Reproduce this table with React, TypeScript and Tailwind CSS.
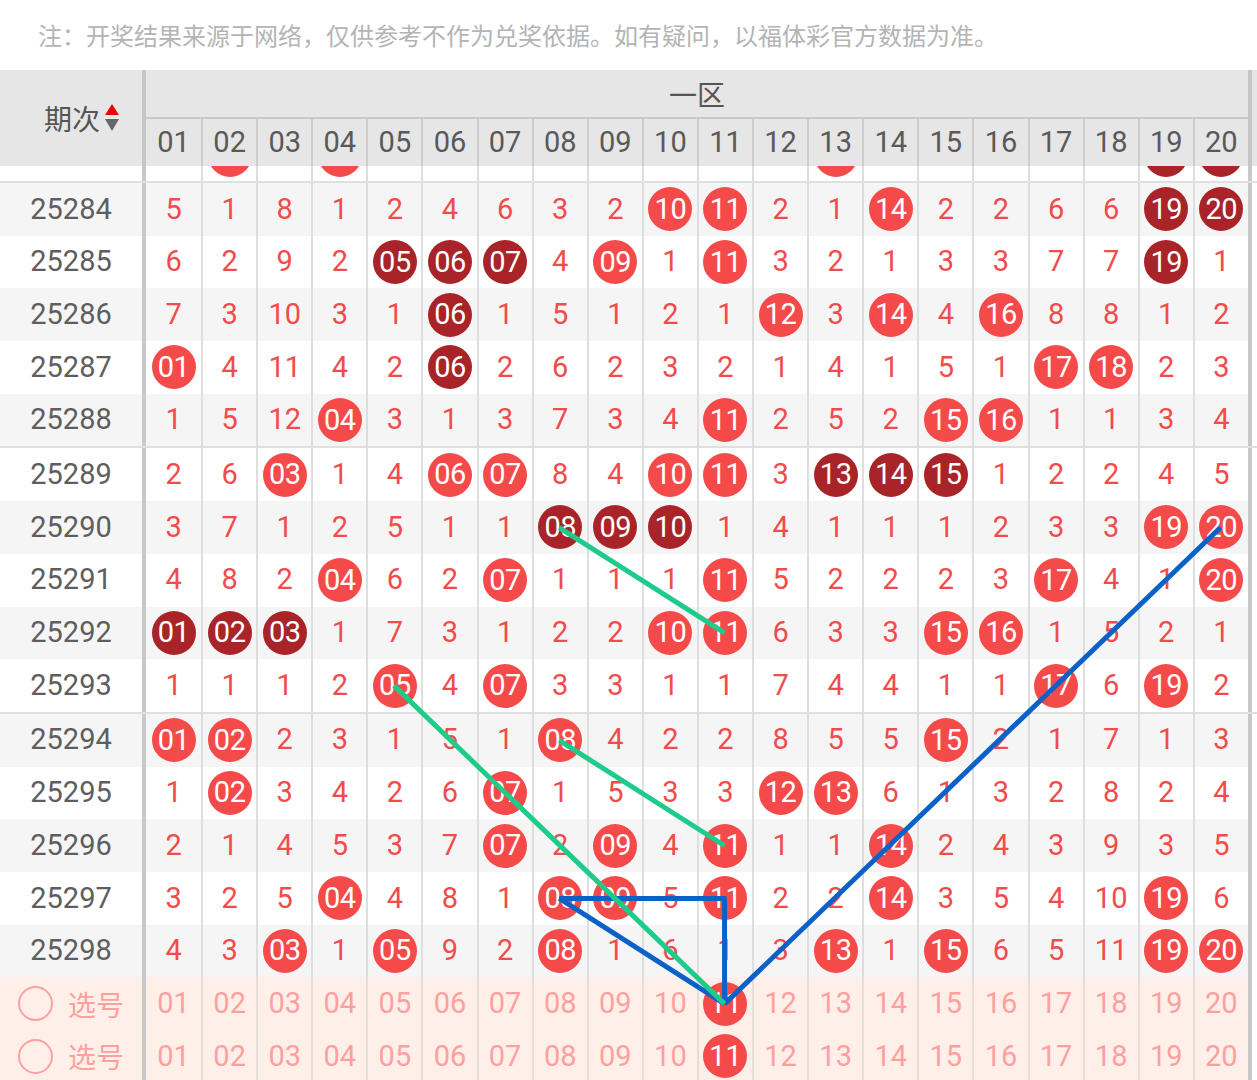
import React from "react";

type Row = { id: string; cells: string[] };

const raw: [string, string][] = [
  ["25283", "4 b02 7 b04 1 3 5 2 1 2 3 1 b13 3 1 1 5 5 d19 d20"],
  ["25284", "5 1 8 1 2 4 6 3 2 b10 b11 2 1 b14 2 2 6 6 d19 d20"],
  ["25285", "6 2 9 2 d05 d06 d07 4 b09 1 b11 3 2 1 3 3 7 7 d19 1"],
  ["25286", "7 3 10 3 1 d06 1 5 1 2 1 b12 3 b14 4 b16 8 8 1 2"],
  ["25287", "b01 4 11 4 2 d06 2 6 2 3 2 1 4 1 5 1 b17 b18 2 3"],
  ["25288", "1 5 12 b04 3 1 3 7 3 4 b11 2 5 2 b15 b16 1 1 3 4"],
  ["25289", "2 6 b03 1 4 b06 b07 8 4 b10 b11 3 d13 d14 d15 1 2 2 4 5"],
  ["25290", "3 7 1 2 5 1 1 d08 d09 d10 1 4 1 1 1 2 3 3 b19 b20"],
  ["25291", "4 8 2 b04 6 2 b07 1 1 1 b11 5 2 2 2 3 b17 4 1 b20"],
  ["25292", "d01 d02 d03 1 7 3 1 2 2 b10 b11 6 3 3 b15 b16 1 5 2 1"],
  ["25293", "1 1 1 2 b05 4 b07 3 3 1 1 7 4 4 1 1 b17 6 b19 2"],
  ["25294", "b01 b02 2 3 1 5 1 b08 4 2 2 8 5 5 b15 2 1 7 1 3"],
  ["25295", "1 b02 3 4 2 6 b07 1 5 3 3 b12 b13 6 1 3 2 8 2 4"],
  ["25296", "2 1 4 5 3 7 b07 2 b09 4 b11 1 1 b14 2 4 3 9 3 5"],
  ["25297", "3 2 5 b04 4 8 1 b08 b09 5 b11 2 2 b14 3 5 4 10 b19 6"],
  ["25298", "4 3 b03 1 b05 9 2 b08 1 6 1 3 b13 1 b15 6 5 11 b19 b20"],
];

const rows: Row[] = raw.map(([id, s]) => ({ id, cells: s.split(" ") }));
const cols = Array.from({ length: 20 }, (_, i) => String(i + 1).padStart(2, "0"));

const COLW = 55.1;
const ROWH = 52.7;
const colX = (c: number) => 146 + (c - 0.5) * COLW;
const g2 = 183;
const g3 = g2 + 5 * ROWH + 2;
const g4 = g3 + 5 * ROWH + 2;
const selTop = g4 + 5 * ROWH;
const rowY = (id: number) => {
  if (id >= 25284 && id <= 25288) return g2 + (id - 25284 + 0.5) * ROWH;
  if (id >= 25289 && id <= 25293) return g3 + (id - 25289 + 0.5) * ROWH;
  return g4 + (id - 25294 + 0.5) * ROWH;
};
const sel1 = selTop + 0.5 * ROWH;

function Cell({ v, first }: { v: string; first: boolean }) {
  const border = first ? "" : "border-l-2 border-[#dedede]";
  if (v.startsWith("b") || v.startsWith("d")) {
    const bg = v.startsWith("b") ? "bg-[#f54a4a]" : "bg-[#a82428]";
    return (
      <div className={`w-[55.1px] h-full flex items-center justify-center ${border}`}>
        <div className={`w-[44px] h-[44px] rounded-full ${bg} flex items-center justify-center text-white text-[29px] leading-none tracking-[-0.5px]`}>
          {v.slice(1)}
        </div>
      </div>
    );
  }
  return (
    <div className={`w-[55.1px] h-full flex items-center justify-center text-[29px] text-[#f24b4b] ${border}`}>
      {v}
    </div>
  );
}

function DataRow({ row, gray }: { row: Row; gray: boolean }) {
  return (
    <div className={`flex h-[52.7px] ${gray ? "bg-[#f5f5f5]" : "bg-white"}`}>
      <div className="w-[142px] h-full flex items-center justify-center text-[29px] text-[#5e5e5e]">{row.id}</div>
      <div className="w-[4px] h-full bg-[#c8c8c8]" />
      {row.cells.map((v, i) => (
        <Cell key={i} v={v} first={i === 0} />
      ))}
      <div className="w-[4px] h-full bg-[#c8c8c8]" />
      <div className="flex-1 h-full bg-white" />
    </div>
  );
}

function SelRow() {
  return (
    <div className="flex h-[52.7px] bg-[#ffefe9]">
      <div className="w-[142px] h-full flex items-center pl-[18px] gap-[15px]">
        <div className="w-[35px] h-[35px] rounded-full border-2 border-[#ffa0a0]" />
        <span className="text-[28px] text-[#ffa0a0] font-[family-name:'Noto_Sans_CJK_SC',sans-serif]">选号</span>
      </div>
      <div className="w-[4px] h-full bg-[#c8c8c8]" />
      {cols.map((c, i) => (
        <div
          key={c}
          className={`w-[55.1px] h-full flex items-center justify-center ${i === 0 ? "" : "border-l-2 border-[#e6dcd8]"}`}
        >
          {c === "11" ? (
            <div className="w-[44px] h-[44px] rounded-full bg-[#f54a4a] flex items-center justify-center text-white text-[29px] leading-none">
              11
            </div>
          ) : (
            <span className="text-[29px] text-[#ffa0a0]">{c}</span>
          )}
        </div>
      ))}
      <div className="w-[4px] h-full bg-[#c8c8c8]" />
      <div className="flex-1 h-full bg-white" />
    </div>
  );
}

function Sep() {
  return <div className="h-[2px] bg-[#e0e0e0]" />;
}

export default function App() {
  const body: React.ReactNode[] = [];
  body.push(<DataRow key="r0" row={rows[0]} gray={false} />);
  rows.slice(1).forEach((r, i) => {
    if (i % 5 === 0) body.push(<Sep key={`s${i}`} />);
    body.push(<DataRow key={r.id} row={r} gray={i % 2 === 0} />);
  });
  body.push(<SelRow key="sel1" />);
  body.push(<SelRow key="sel2" />);

  const green = "#1fcb8b";
  const blue = "#0a62c8";
  const x5 = colX(5), x8 = colX(8), x11 = colX(11), x20 = colX(20);

  return (
    <div className="w-[1257px] h-[1080px] overflow-hidden bg-white relative font-[family-name:Roboto,'Noto_Sans_CJK_SC',sans-serif]">
      <div className="h-[70px] flex items-center pl-[38px] text-[24px] text-[#b4b4b4] font-[family-name:'Noto_Sans_CJK_SC',sans-serif]">
        注：开奖结果来源于网络，仅供参考不作为兑奖依据。如有疑问，以福体彩官方数据为准。
      </div>
      <div className="flex h-[96px] bg-[#e6e6e6]">
        <div className="w-[142px] h-full flex items-center justify-center pl-[22px] text-[28px] text-[#555]">
          <span className="font-[family-name:'Noto_Sans_CJK_SC',sans-serif]">期次</span>
          <svg width="16" height="30" viewBox="0 0 16 30" className="ml-[4px]">
            <polygon points="8,1 15,12 1,12" fill="#f20000" />
            <polygon points="1,16 15,16 8,28" fill="#666" />
          </svg>
        </div>
        <div className="w-[4px] h-full bg-[#c6c6c6]" />
        <div className="w-[1102px] h-full flex flex-col">
          <div className="h-[47px] flex items-center justify-center text-[28px] text-[#555] font-[family-name:'Noto_Sans_CJK_SC',sans-serif]">
            一区
          </div>
          <div className="h-[2px] bg-[#c8c8c8]" />
          <div className="h-[47px] flex">
            {cols.map((c, i) => (
              <div
                key={c}
                className={`w-[55.1px] h-full flex items-center justify-center text-[29px] text-[#595959] ${i === 0 ? "" : "border-l-2 border-[#cdcdcd]"}`}
              >
                {c}
              </div>
            ))}
          </div>
        </div>
        <div className="w-[4px] h-full bg-[#c6c6c6]" />
        <div className="flex-1 h-full" />
      </div>
      <div className="h-[914px] overflow-hidden">
        <div className="mt-[-37.7px]">{body}</div>
      </div>
      <svg className="absolute left-0 top-0 pointer-events-none" width="1257" height="1080">
        <g stroke={blue} strokeWidth="5" strokeLinecap="butt" fill="none">
          <line x1={x8} y1={rowY(25297)} x2={x11 + 2} y2={rowY(25297)} />
          <line x1={x11} y1={rowY(25297)} x2={x11} y2={sel1} />
          <line x1={x8} y1={rowY(25297)} x2={x11} y2={sel1} />
          <line x1={x11} y1={sel1} x2={x20} y2={rowY(25290)} />
        </g>
        <g stroke={green} strokeWidth="5" strokeLinecap="butt" fill="none">
          <line x1={x8} y1={rowY(25290)} x2={x11} y2={rowY(25292)} />
          <line x1={x5} y1={rowY(25293)} x2={x11} y2={sel1} />
          <line x1={x8} y1={rowY(25294)} x2={x11} y2={rowY(25296)} />
        </g>
      </svg>
    </div>
  );
}
